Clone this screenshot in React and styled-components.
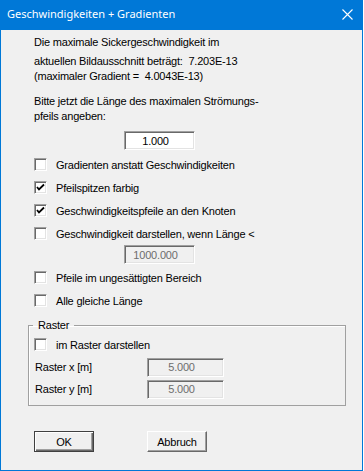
import React from "react";
import styled, { createGlobalStyle, css } from "styled-components";

const Global = createGlobalStyle`
  html, body {
    margin: 0;
    padding: 0;
    background: #ffffff;
  }
  * {
    box-sizing: border-box;
  }
`;

const sunken = css`
  border: 1px solid;
  border-color: #a0a0a0 #ffffff #ffffff #a0a0a0;
  box-shadow: inset 1px 1px #696969, inset -1px -1px #e3e3e3;
`;

const Window = styled.div`
  width: 363px;
  height: 471px;
  display: flex;
  flex-direction: column;
  border: 1px solid #0078d7;
  border-top: none;
  background: #f0f0f0;
  font-family: "Liberation Sans", Arial, sans-serif;
  font-size: 11px;
  letter-spacing: -0.2px;
  color: #000000;
`;

const TitleBar = styled.div`
  height: 30px;
  margin: 0 -1px;
  background: #0078d7;
  color: #ffffff;
  display: flex;
  align-items: center;
  justify-content: space-between;
  padding: 0 10px 3px 7px;
  font-family: "Noto Sans", "Open Sans", sans-serif;
  font-size: 11px;
  letter-spacing: 0;
`;

const Close = styled.svg`
  width: 11px;
  height: 11px;
  margin-top: 2px;
`;

const Content = styled.div`
  flex: 1;
  display: flex;
  flex-direction: column;
  padding: 5px 0 0 33px;
`;

const Text = styled.div`
  line-height: 15px;
  white-space: pre;
  margin-top: ${(p) => p.$gap || 0}px;
`;

const Field = styled.div`
  ${sunken};
  width: ${(p) => p.$w}px;
  height: 19px;
  margin-left: ${(p) => p.$x || 0}px;
  margin-top: ${(p) => p.$gap || 0}px;
  background: ${(p) => (p.$disabled ? "#f0f0f0" : "#ffffff")};
  color: ${(p) => (p.$disabled ? "#6d6d6d" : "#000000")};
  display: flex;
  align-items: center;
  justify-content: center;
  padding-right: 8px;
  flex-shrink: 0;
`;

const CheckRow = styled.div`
  height: 23px;
  display: flex;
  align-items: center;
  gap: 9px;
  margin-top: ${(p) => p.$gap || 0}px;
`;

const Box = styled.div`
  ${sunken};
  width: 13px;
  height: 13px;
  background: #ffffff;
  display: flex;
  align-items: center;
  justify-content: center;
  flex-shrink: 0;
`;

const Group = styled.fieldset`
  margin: 6px 0 0 -6px;
  width: 318px;
  padding: 0 0 5px 5px;
  border: 1px solid #a0a0a0;
  box-shadow: 1px 1px #ffffff inset;
`;

const Legend = styled.legend`
  margin-left: -1px;
  padding: 0 5px;
  line-height: 15px;
`;

const FieldRow = styled.div`
  height: 22px;
  display: flex;
  align-items: center;
`;

const FieldLabel = styled.div`
  width: 113px;
  padding-left: 1px;
`;

const Buttons = styled.div`
  display: flex;
  gap: 53px;
  margin-top: 25px;
`;

const Button = styled.div`
  width: 60px;
  height: 21px;
  display: flex;
  align-items: center;
  justify-content: center;
  background: #f0f0f0;
  border: 1px solid;
  border-color: #ffffff #696969 #696969 #ffffff;
  box-shadow: inset -1px -1px #a0a0a0;
  ${(p) =>
    p.$default &&
    css`
      border: 1px solid #404040;
      box-shadow: inset 1px 1px #ffffff, inset -1px -1px #696969,
        inset -2px -2px #a0a0a0;
    `}
`;

const Check = ({ checked, label, gap }) => (
  <CheckRow $gap={gap}>
    <Box>
      {checked && (
        <svg width="9" height="9" viewBox="0 0 9 9">
          <polyline
            points="1,4 3,6.5 8,1.5"
            fill="none"
            stroke="#000"
            strokeWidth="1.8"
          />
        </svg>
      )}
    </Box>
    <span>{label}</span>
  </CheckRow>
);

export default function App() {
  return (
    <>
      <Global />
      <Window>
        <TitleBar>
          <span>Geschwindigkeiten + Gradienten</span>
          <Close viewBox="0 0 11 11">
            <path d="M0.5 0.5 L10.5 10.5 M10.5 0.5 L0.5 10.5" stroke="#fff" strokeWidth="1.1" />
          </Close>
        </TitleBar>
        <Content>
          <Text>Die maximale Sickergeschwindigkeit im</Text>
          <Text $gap={4}>
            {"aktuellen Bildausschnitt beträgt:  7.203E-13\n(maximaler Gradient =  4.0043E-13)"}
          </Text>
          <Text $gap={10}>
            {"Bitte jetzt die Länge des maximalen Strömungs-\npfeils angeben:"}
          </Text>
          <Field $w={71} $x={90} $gap={7}>1.000</Field>
          <Check gap={3} label="Gradienten anstatt Geschwindigkeiten" />
          <Check checked label="Pfeilspitzen farbig" />
          <Check checked label="Geschwindigkeitspfeile an den Knoten" />
          <Check label="Geschwindigkeit darstellen, wenn Länge <" />
          <Field $w={71} $x={90} $disabled>1000.000</Field>
          <Check gap={2} label="Pfeile im ungesättigten Bereich" />
          <Check label="Alle gleiche Länge" />
          <Group>
            <Legend>Raster</Legend>
            <Check label="im Raster darstellen" />
            <FieldRow>
              <FieldLabel>Raster x [m]</FieldLabel>
              <Field $w={77} $disabled>5.000</Field>
            </FieldRow>
            <FieldRow>
              <FieldLabel>Raster y [m]</FieldLabel>
              <Field $w={77} $disabled>5.000</Field>
            </FieldRow>
          </Group>
          <Buttons>
            <Button $default>OK</Button>
            <Button>Abbruch</Button>
          </Buttons>
        </Content>
      </Window>
    </>
  );
}
